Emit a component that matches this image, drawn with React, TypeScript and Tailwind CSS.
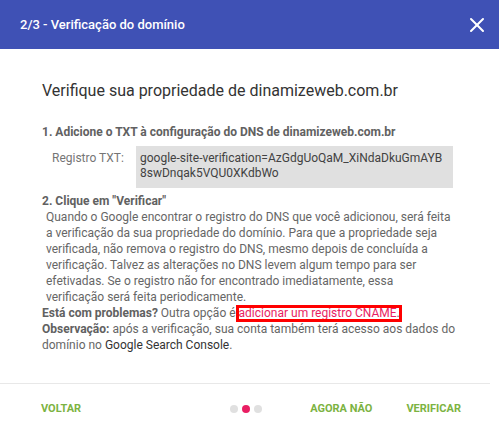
import { X } from 'lucide-react';

const paragraph = [
  'Quando o Google encontrar o registro do DNS que você adicionou, será feita',
  'a verificação da sua propriedade do domínio. Para que a propriedade seja',
  'verificada, não remova o registro do DNS, mesmo depois de concluída a',
  'verificação. Talvez as alterações no DNS levem algum tempo para ser',
  'efetivadas. Se o registro não for encontrado imediatamente, essa',
  'verificação será feita periodicamente.',
];

export default function App() {
  return (
    <div className="w-[499px] h-[431px] bg-white font-['Roboto',sans-serif] overflow-hidden">
      {/* Header */}
      <div className="h-[49px] bg-[#3f51b5] flex items-center justify-between pl-5 pr-[10px]">
        <span className="text-white text-[13px] font-medium">2/3 - Verificação do domínio</span>
        <X className="w-[24px] h-[24px] text-white" strokeWidth={2} />
      </div>

      {/* Body */}
      <div className="pl-[42px] pr-[40px]">
        <h2 className="mt-[32px] text-[16px] leading-[20px] text-[#333]">
          Verifique sua propriedade de dinamizeweb.com.br
        </h2>

        <p className="mt-[23px] text-[12px] leading-[16px] font-bold text-[#616161]">
          1. Adicione o TXT à configuração do DNS de dinamizeweb.com.br
        </p>

        <div className="mt-[6px] flex">
          <span className="w-[94px] pl-[10px] pt-[5px] text-[12px] leading-[15px] text-[#757575]">
            Registro TXT:
          </span>
          <div className="w-[317px] h-[42px] bg-[#e0e0e0] pl-[4px] pt-[5px] text-[12px] leading-[15px] text-[#424242] whitespace-nowrap">
            google-site-verification=AzGdgUoQaM_XiNdaDkuGmAYB
            <br />
            8swDnqak5VQU0XKdbWo
          </div>
        </div>

        <p className="mt-[5px] text-[12px] leading-[16px] font-bold text-[#616161]">
          2. Clique em "Verificar"
        </p>
        <p className="pl-[4px] text-[12px] leading-[16px] text-[#666] whitespace-nowrap">
          {paragraph.map((line) => (
            <span key={line} className="block">
              {line}
            </span>
          ))}
        </p>
        <p className="text-[12px] leading-[16px] text-[#666] whitespace-nowrap">
          <span className="font-bold text-[#616161]">Está com problemas?</span> Outra opção é{' '}
          <span className="relative">
            <span className="absolute -left-[3px] -right-[2px] -top-[1px] -bottom-[2px] border-[3px] border-[#ff0000]" />
            <span className="text-[#e91e63]">adicionar um registro CNAME</span>.
          </span>
        </p>
        <p className="text-[12px] leading-[16px] text-[#666] whitespace-nowrap">
          <span className="font-bold text-[#616161]">Observação:</span> após a verificação, sua conta também terá acesso aos dados do
          <br />
          domínio no <span className="text-[#333]">Google Search Console</span>.
        </p>
      </div>

      {/* Footer */}
      <div className="mt-[30px] w-[490px] border-t border-[#e8e8e8]">
        <div className="h-[50px] flex items-center text-[11px] font-bold text-[#7cb342]">
          <span className="ml-[41px]">VOLTAR</span>
          <div className="ml-[149px] flex items-center gap-[4px]">
            <span className="w-[8px] h-[8px] rounded-full bg-[#e0e0e0]" />
            <span className="w-[8px] h-[8px] rounded-full bg-[#e91e63]" />
            <span className="w-[8px] h-[8px] rounded-full bg-[#e0e0e0]" />
          </div>
          <span className="ml-[48px]">AGORA NÃO</span>
          <span className="ml-[34px]">VERIFICAR</span>
        </div>
      </div>
    </div>
  );
}
